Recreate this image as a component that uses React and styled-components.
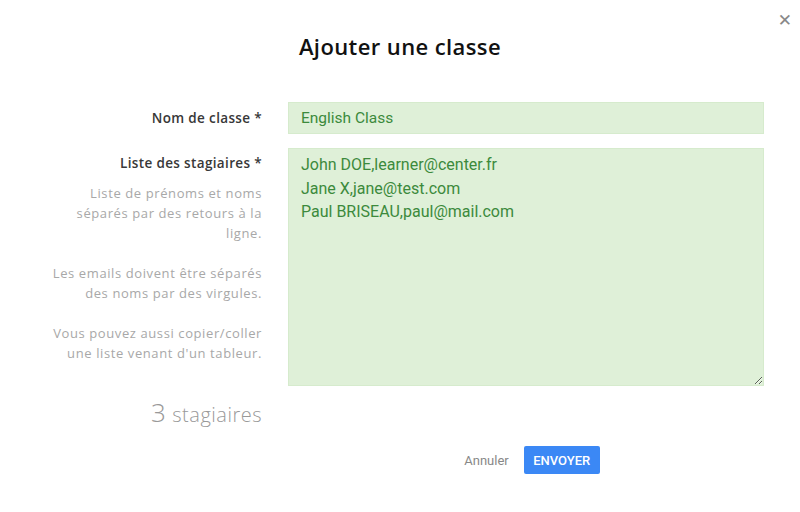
import React from "react";
import styled, { createGlobalStyle } from "styled-components";

const Global = createGlobalStyle`
  html, body { margin: 0; padding: 0; background: #fff; }
  * { box-sizing: border-box; }
`;

const Modal = styled.div`
  position: relative;
  width: 800px;
  height: 512px;
  background: #fff;
  font-family: "Open Sans", "Noto Sans", sans-serif;
  padding-top: 31px;
`;

const Close = styled.button`
  position: absolute;
  top: 10px;
  right: 8px;
  border: none;
  background: none;
  color: #888;
  font-family: "DejaVu Sans", sans-serif;
  font-size: 17px;
  font-weight: bold;
  line-height: 20px;
  padding: 0;
  cursor: pointer;
`;

const Title = styled.h1`
  margin: 0;
  text-align: center;
  font-size: 22px;
  font-weight: 600;
  color: #111;
  line-height: 30px;
  letter-spacing: 0.4px;
`;

const Form = styled.div`
  display: grid;
  grid-template-columns: 222px 476px;
  column-gap: 26px;
  row-gap: 14px;
  padding-left: 40px;
  margin-top: 41px;
`;

const LabelCol = styled.div`
  display: flex;
  flex-direction: column;
  align-items: flex-end;
  text-align: right;
`;

const Label = styled.label`
  font-size: 13.5px;
  font-weight: 600;
  color: #383838;
  line-height: 20px;
  letter-spacing: 0.35px;
  padding-top: ${(p) => p.$pt || 6}px;
`;

const Help = styled.p`
  margin: 0;
  margin-top: ${(p) => p.$mt}px;
  font-size: 13px;
  font-weight: 400;
  color: #a8a8a8;
  line-height: 20px;
  letter-spacing: 0.6px;
`;

const Field = styled.input`
  width: 100%;
  height: 32px;
  border: 1px solid #d6ebcd;
  background: #dff0d8;
  color: #3c8a3c;
  font-family: Roboto, "Open Sans", sans-serif;
  font-size: 15.5px;
  padding: 0 12px;
  outline: none;
`;

const Area = styled.textarea`
  width: 100%;
  height: 238px;
  border: 1px solid #d6ebcd;
  background: #dff0d8;
  color: #3c8a3c;
  font-family: Roboto, "Open Sans", sans-serif;
  font-size: 16px;
  line-height: 23.5px;
  padding: 4px 12px;
  outline: none;
  resize: vertical;
  display: block;
`;

const Counter = styled.div`
  height: 24px;
  display: flex;
  justify-content: flex-end;
  align-items: baseline;
  gap: 6px;
  color: #999;
  font-size: 20px;
  font-weight: 300;
  line-height: 24px;
  letter-spacing: 0.5px;
`;

const Big = styled.span`
  font-size: 26px;
  line-height: 24px;
`;

const Actions = styled.div`
  grid-column: 2;
  display: flex;
  justify-content: center;
  align-items: center;
  gap: 15px;
  margin-top: 8px;
  padding-left: 12px;
`;

const Cancel = styled.button`
  border: none;
  background: none;
  color: #888;
  font-family: Roboto, sans-serif;
  font-size: 13px;
  padding: 0;
  cursor: pointer;
`;

const Submit = styled.button`
  border: none;
  background: #3b88f5;
  color: #fff;
  font-family: Roboto, sans-serif;
  font-weight: 500;
  font-size: 13px;
  width: 76px;
  height: 28px;
  border-radius: 2px;
  cursor: pointer;
`;

export default function App() {
  return (
    <>
      <Global />
      <Modal>
        <Close aria-label="Fermer">✕</Close>
        <Title>Ajouter une classe</Title>
        <Form>
          <LabelCol>
            <Label>Nom de classe *</Label>
          </LabelCol>
          <Field defaultValue="English Class" />
          <LabelCol>
            <Label $pt={5}>Liste des stagiaires *</Label>
            <Help $mt={10}>
              Liste de prénoms et noms
              <br />
              séparés par des retours à la
              <br />
              ligne.
            </Help>
            <Help $mt={20}>
              Les emails doivent être séparés
              <br />
              des noms par des virgules.
            </Help>
            <Help $mt={20}>
              Vous pouvez aussi copier/coller
              <br />
              une liste venant d'un tableur.
            </Help>
          </LabelCol>
          <Area
            defaultValue={
              "John DOE,learner@center.fr\nJane X,jane@test.com\nPaul BRISEAU,paul@mail.com"
            }
          />
          <Counter>
            <Big>3</Big>
            <span>stagiaires</span>
          </Counter>
          <div />
          <Actions>
            <Cancel>Annuler</Cancel>
            <Submit>ENVOYER</Submit>
          </Actions>
        </Form>
      </Modal>
    </>
  );
}
